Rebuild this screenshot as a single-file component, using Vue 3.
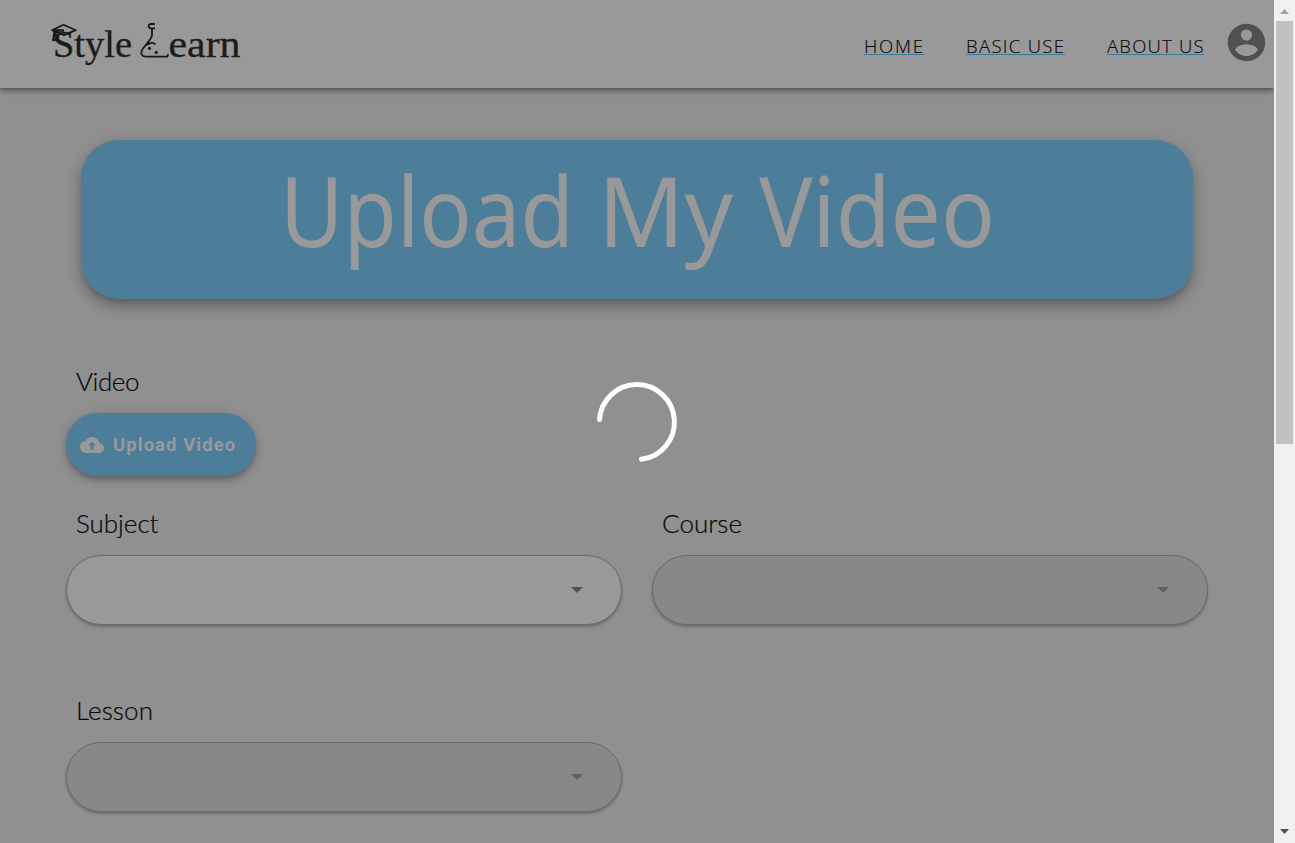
<script setup>
const links = [
  { label: 'HOME', width: 60 },
  { label: 'BASIC USE', width: 99 },
  { label: 'ABOUT US', width: 97.5 }
]
const fields = [
  { label: 'Subject', width: 82.5, disabled: false },
  { label: 'Course', width: 80, disabled: true },
  { label: 'Lesson', width: 77, disabled: true }
]
</script>

<template>
  <div class="app">
    <div class="page">
      <header class="bar">
        <svg class="logo" width="200" height="60" viewBox="50 20 200 60">
          <g class="word">
            <text x="53" y="57" textLength="79" lengthAdjust="spacingAndGlyphs">Style</text>
            <text x="168.500" y="57" textLength="72" lengthAdjust="spacingAndGlyphs">earn</text>
          </g>
          <g class="lines">
            <path d="M52 30.200L63.500 24.700L75.800 30.200L64 35.200Z" />
            <path class="tassel" d="M64 30.500H55L53 41M54.500 31L57 38L55 41" />
            <path d="M155 24H150Q147 26 150 28.300H155M152 28.500V35.500Q151 39 145 46Q140.500 51 141.500 54Q142.500 56.700 147 56.700H167Q168 56 168 54M147 45Q152 41 155.500 44.500" />
          </g>
          <circle cx="149.500" cy="48.300" r="1.600" /><circle cx="156.300" cy="52.300" r="1.600" />
        </svg>
        <nav>
          <a v-for="l in links" :key="l.label" :style="{ width: l.width + 'px' }">
            <svg :width="l.width + 8" height="30" :viewBox="`0 -4 ${l.width + 8} 30`"><text x="0" y="17" :textLength="l.width - 1">{{ l.label }}</text></svg>
          </a>
        </nav>
        <svg class="account" width="45" height="45" viewBox="0 0 24 24"><path d="M12,19.2C9.5,19.2 7.29,17.92 6,16C6.03,14 10,12.9 12,12.9C14,12.9 17.97,14 18,16C16.71,17.92 14.5,19.2 12,19.2M12,5A3,3 0 0,1 15,8A3,3 0 0,1 12,11A3,3 0 0,1 9,8A3,3 0 0,1 12,5M12,2A10,10 0 0,0 2,12A10,10 0 0,0 12,22A10,10 0 0,0 22,12C22,6.47 17.5,2 12,2Z" /></svg>
      </header>

      <main>
        <h1 class="banner">
          <svg width="800" height="158" viewBox="-40 0 800 158">
            <text y="107"><tspan x="3" textLength="294" lengthAdjust="spacingAndGlyphs">Upload</tspan> <tspan x="321" textLength="135" lengthAdjust="spacingAndGlyphs">My</tspan> <tspan x="482" textLength="236" lengthAdjust="spacingAndGlyphs">Video</tspan></text>
          </svg>
        </h1>
        <section class="video">
          <svg class="label" width="100" height="36"><text x="0" y="26" textLength="63.500">Video</text></svg>
          <button class="upload">
            <svg width="24" height="24" viewBox="0 0 24 24"><path d="M19.35 10.03C18.67 6.59 15.64 4 12 4 9.11 4 6.6 5.64 5.35 8.03 2.34 8.36 0 10.9 0 14a6 6 0 0 0 6 6h13a5 5 0 0 0 5-5c0-2.640-2.050-4.780-4.650-4.970zM13.500 12.500v4h-3v-4H8l4-4 4 4z" /></svg>
            <span>Upload Video</span>
          </button>
        </section>
        <section class="fields">
          <div v-for="f in fields" :key="f.label" class="field">
            <svg class="label" width="120" height="36"><text x="0" y="26" :textLength="f.width">{{ f.label }}</text></svg>
            <div class="select" :class="{ disabled: f.disabled }">
              <svg width="12" height="6"><path d="M0 0H12L6 6Z" /></svg>
            </div>
          </div>
        </section>
      </main>
      <svg class="spinner" width="84" height="84" viewBox="0 0 84 84"><path d="M4.500 39.500A37.500 37.500 0 1 1 46.500 79.300" /></svg>
    </div>
    <aside class="scrollbar">
      <svg width="9" height="5"><path d="M0 5H9L4.500 0Z" fill="#a3a3a3" /></svg>
      <div class="thumb"></div>
      <svg class="down" width="9" height="5"><path d="M0 0H9L4.500 5Z" fill="#505050" /></svg>
    </aside>
  </div>
</template>

<style>
body { margin: 0; overflow: hidden; }
</style>

<style scoped>
* { box-sizing: border-box; }
.app { display: flex; width: 1295px; height: 843px; overflow: hidden; font-family: Lato, "Open Sans", sans-serif; }
.page { position: relative; width: 1274px; height: 843px; background: #909090; overflow: hidden; }
svg { display: block; flex: none; }
.bar { position: relative; display: flex; align-items: flex-start; height: 88px; padding-left: 50px; background: #999; box-shadow: 0 2px 4px -1px rgba(0,0,0,.32), 0 4px 5px rgba(0,0,0,.16), 0 1px 10px rgba(0,0,0,.12); }
.logo { margin-top: 20px; fill: #1c1c1c; }
.word { font: 37px "Liberation Serif", serif; stroke: #1c1c1c; stroke-width: .35px; }
.lines { fill: none; stroke: #181818; stroke-width: 1.8px; stroke-linejoin: round; }
.tassel { stroke-width: 2.300px; }
nav { display: flex; gap: 42px; margin: 36px 0 0 auto; }
nav a { height: 19px; border-bottom: 1px solid #397ca2; }
nav svg { margin-top: -4px; }
nav text { font: 300 18.500px "Open Sans", "Noto Sans", sans-serif; fill: #080808; stroke: #080808; stroke-width: .15px; }
.account { margin: 20px 5px 0 20px; fill: #505050; }
main { padding: 52px 66px 0; }
.banner { display: flex; justify-content: center; width: 1112px; height: 159px; margin: 0 0 0 15px; border-radius: 38px; background: #4c7e9a; box-shadow: 0 5px 6px -3px rgba(0,0,0,.2), 0 9px 12px 1px rgba(0,0,0,.14), 0 3px 16px 2px rgba(0,0,0,.12); }
.banner text { font: 400 96px "Noto Sans", sans-serif; fill: #999; }
.video { margin-top: 66px; }
.label { margin-left: 10px; }
.label text { font-size: 26px; font-weight: 300; fill: #080808; stroke: #080808; stroke-width: .2px; }
.upload { display: flex; align-items: center; gap: 9px; width: 190px; height: 63px; margin-top: 12px; padding: 0 0 0 14px; border: 0; border-radius: 32px; background: #4c7e9a; color: #999; font: 700 18.400px Roboto, sans-serif; letter-spacing: 1.100px; box-shadow: 0 3px 5px -1px rgba(0,0,0,.2), 0 5px 8px rgba(0,0,0,.14), 0 1px 14px rgba(0,0,0,.1); white-space: nowrap; }
.upload svg { fill: #999; }
.fields { display: grid; grid-template-columns: 556px 556px; gap: 69px 30px; margin-top: 31px; }
.select { display: flex; justify-content: flex-end; align-items: center; height: 70px; margin-top: 12px; padding-right: 38px; border: 1px solid #6b6b6b; border-radius: 36px; background: #999; box-shadow: 0 2px 3px rgba(0,0,0,.25); }
.select svg { fill: #505050; }
.disabled { background: #888; }
.select.disabled svg { fill: #606060; }
.spinner { position: absolute; left: 595px; top: 380px; fill: none; stroke: #fff; stroke-width: 5px; stroke-linecap: round; }
.scrollbar { display: flex; flex-direction: column; align-items: center; width: 21px; height: 843px; padding: 9px 0; background: #f1f1f1; }
.thumb { width: 17px; height: 423px; margin-top: 7px; background: #c1c1c1; }
.down { margin-top: auto; }
</style>
